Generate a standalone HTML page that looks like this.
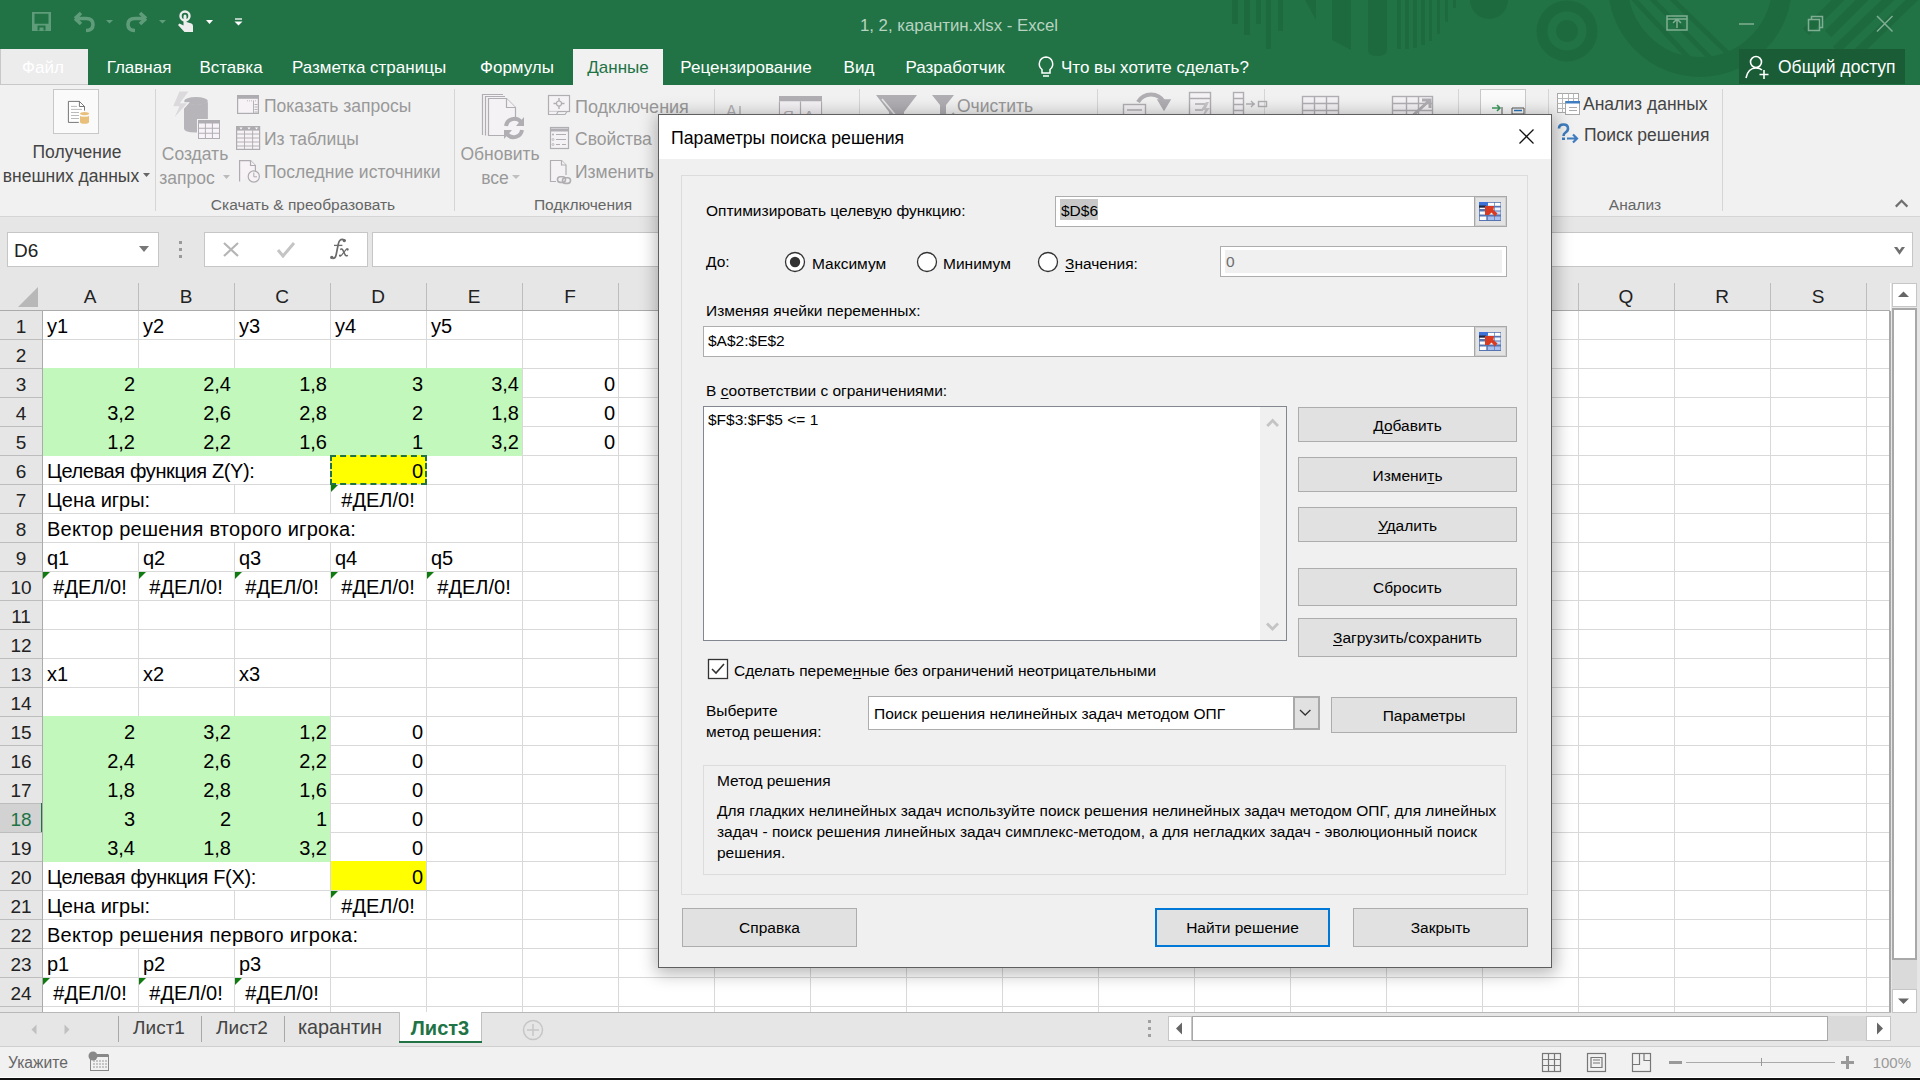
<!DOCTYPE html>
<html><head><meta charset="utf-8"><style>
html,body{margin:0;padding:0;width:1920px;height:1080px;overflow:hidden;background:#fff;position:relative}
body{font-family:"Liberation Sans",sans-serif}
.t{position:absolute;white-space:pre;line-height:1;font-family:"Liberation Sans",sans-serif}
u{text-decoration-thickness:1px;text-underline-offset:2px}
</style></head><body>
<div style="position:absolute;left:0px;top:0px;width:1920px;height:49px;background:#217346"></div>
<div style="position:absolute;left:0px;top:49px;width:1920px;height:36px;background:#217346"></div>
<svg style="position:absolute;left:0;top:0" width="1920" height="85">
<defs><clipPath id="cp1"><rect x="0" y="0" width="1920" height="85"/></clipPath></defs>
<g fill="#1e6a3f">
<rect x="1232" y="0" width="6" height="24"/><rect x="1244" y="0" width="6" height="35"/><rect x="1256" y="0" width="5" height="24"/><rect x="1266" y="0" width="5" height="49"/><rect x="1278" y="0" width="5" height="31"/>
<path d="M1305 0H1316V20z"/>
<path d="M1332 0H1351V50L1332 40z"/>
<path d="M1368 0H1387V50Q1387 56 1377 56Q1368 56 1368 50z"/>
<rect x="1397" y="0" width="4" height="49"/><rect x="1405" y="0" width="4" height="49"/><rect x="1413" y="0" width="4" height="48"/><rect x="1421" y="0" width="4" height="45"/><rect x="1429" y="0" width="3" height="41"/><rect x="1437" y="0" width="3" height="34"/><rect x="1445" y="0" width="3" height="22"/><rect x="1453" y="0" width="3" height="8"/>
<circle cx="1489" cy="0" r="19"/>
<circle cx="1567" cy="31" r="11"/>
</g>
<circle cx="1567" cy="31" r="25" fill="none" stroke="#1e6a3f" stroke-width="11"/>
<circle cx="1700" cy="-15" r="82" fill="none" stroke="#1e6a3f" stroke-width="20"/>
<g stroke="#1e6a3f" stroke-width="5"><path d="M1630 -5L1700 70M1648 -5L1722 70M1668 -5L1745 70"/></g>
<g stroke="#1e6a3f" stroke-width="9"><path d="M1806 32L1842 -4M1828 34L1866 -4M1836 50L1892 -4M1858 52L1916 -4"/></g>
</svg>
<svg style="position:absolute;left:0;top:0" width="260" height="48">
<path d="M32 12H51V31H32z M34.5 13.8V23.8H48.5V13.8z M37.5 25.5V30.5H39.5V27.5H43.5V30.5H45.5V25.5z" fill="#5f9d7a" fill-rule="evenodd"/>
<path d="M75 18.5L81 13M75 18.5L81 24M76 18.5H86Q93 18.5 93 24.5Q93 30.5 86 30.5" fill="none" stroke="#5f9d7a" stroke-width="3.6"/>
<path d="M106 20H113L109.5 23.5z" fill="#5f9d7a"/>
<path d="M146 18.5L140 13M146 18.5L140 24M145 18.5H135Q128 18.5 128 24.5Q128 30.5 135 30.5" fill="none" stroke="#5f9d7a" stroke-width="3.6"/>
<path d="M159 20H166L162.5 23.5z" fill="#5f9d7a"/>
<circle cx="185" cy="16" r="4.5" fill="none" stroke="#eee" stroke-width="2.4"/>
<path d="M183.5 16.5Q183.5 14.5 185 14.5Q186.5 14.5 186.5 16.5V22L191.5 23.5Q193 24 193 26V32H184.5L178 25L179.5 23.5L183.5 25.5z" fill="#eee"/>
<path d="M206 20H213L209.5 24z" fill="#fff"/>
<path d="M235 19H242" stroke="#fff" stroke-width="1.3"/><path d="M234.5 21.5H242.5L238.5 25.5z" fill="#fff"/>
</svg>
<div class="t" style="left:959px;transform:translateX(-50%);top:17.8px;font-size:16.8px;color:#b8d4c0;">1, 2, карантин.xlsx - Excel</div>
<svg style="position:absolute;left:1660px;top:12px" width="240" height="24"><g fill="none" stroke="#7fae93" stroke-width="1.5"><rect x="7" y="4" width="20" height="14"/><path d="M17 16V8M13 11l4-4 4 4M7 7h20"/><path d="M79 12h15"/><rect x="148.5" y="7.5" width="11" height="11"/><path d="M151.5 7.5V4.5h11v11h-3"/><path d="M217 4l15.5 15.5M232.5 4l-15.5 15.5"/></g></svg>
<div style="position:absolute;left:0px;top:49px;width:88px;height:36px;background:#ececec;border-left:1px solid #c8c8c8;border-bottom:1px solid #c8c8c8;box-sizing:border-box"></div>
<div class="t" style="left:43px;transform:translateX(-50%);top:59.1px;font-size:17px;color:#fff;">Файл</div>
<div class="t" style="left:139px;transform:translateX(-50%);top:59.1px;font-size:17px;color:#fff;">Главная</div>
<div class="t" style="left:231px;transform:translateX(-50%);top:59.1px;font-size:17px;color:#fff;">Вставка</div>
<div class="t" style="left:369px;transform:translateX(-50%);top:59.1px;font-size:17px;color:#fff;">Разметка страницы</div>
<div class="t" style="left:517px;transform:translateX(-50%);top:59.1px;font-size:17px;color:#fff;">Формулы</div>
<div class="t" style="left:746px;transform:translateX(-50%);top:59.1px;font-size:17px;color:#fff;">Рецензирование</div>
<div class="t" style="left:859px;transform:translateX(-50%);top:59.1px;font-size:17px;color:#fff;">Вид</div>
<div class="t" style="left:955px;transform:translateX(-50%);top:59.1px;font-size:17px;color:#fff;">Разработчик</div>
<div style="position:absolute;left:573px;top:49px;width:90px;height:37px;background:#f1f1f1"></div>
<div class="t" style="left:618px;transform:translateX(-50%);top:59.1px;font-size:17px;color:#217346;">Данные</div>
<svg style="position:absolute;left:1035px;top:54px" width="22" height="26"><path d="M11 3a7 7 0 0 1 4 12.5v3.5h-8v-3.5A7 7 0 0 1 11 3z M8 22h6" fill="none" stroke="#fff" stroke-width="1.5"/></svg>
<div class="t" style="left:1061px;top:59.1px;font-size:17px;color:#fff;">Что вы хотите сделать?</div>
<div style="position:absolute;left:1739px;top:49px;width:166px;height:35px;background:#1a5c36"></div>
<svg style="position:absolute;left:1745px;top:54px" width="26" height="26"><g fill="none" stroke="#fff" stroke-width="1.6"><circle cx="11" cy="8" r="5.5"/><path d="M1 24 Q3 14 11 14 Q15 14 17 16"/><path d="M19 16v9M14.5 20.5h9"/></g></svg>
<div class="t" style="left:1778px;top:58.7px;font-size:17.5px;color:#fff;">Общий доступ</div>
<div style="position:absolute;left:0px;top:85px;width:1920px;height:132px;background:#f1f1f1;border-bottom:1px solid #d5d5d5;box-sizing:border-box"></div>
<div style="position:absolute;left:155px;top:89px;width:1px;height:122px;background:#d5d5d5"></div>
<div style="position:absolute;left:454px;top:89px;width:1px;height:122px;background:#d5d5d5"></div>
<div style="position:absolute;left:714px;top:89px;width:1px;height:122px;background:#d5d5d5"></div>
<div style="position:absolute;left:859px;top:89px;width:1px;height:122px;background:#d5d5d5"></div>
<div style="position:absolute;left:1097px;top:89px;width:1px;height:122px;background:#d5d5d5"></div>
<div style="position:absolute;left:1264px;top:89px;width:1px;height:122px;background:#d5d5d5"></div>
<div style="position:absolute;left:1458px;top:89px;width:1px;height:122px;background:#d5d5d5"></div>
<div style="position:absolute;left:1548px;top:89px;width:1px;height:122px;background:#d5d5d5"></div>
<div style="position:absolute;left:1722px;top:89px;width:1px;height:122px;background:#d5d5d5"></div>
<div style="position:absolute;left:53px;top:89px;width:46px;height:45px;background:#fafafa;border:1px solid #c8c8c8;box-sizing:border-box"></div>
<svg style="position:absolute;left:0;top:0" width="100" height="130"><g fill="none"><path d="M78.8 122.4H68.4V101.4H79.4L84.5 106.5V110.6" stroke="#666" stroke-width="0.9" fill="#fff"/><path d="M79.4 101.4V106.5H84.5" stroke="#666" stroke-width="0.9"/><path d="M71 106.4H77M71 109.4H82M71 112.5H79M71 115.5H79M71 118.5H79" stroke="#aaa" stroke-width="0.8"/></g><path d="M80 115.6V122Q80 123.8 84.5 123.8Q89 123.8 89 122V115.6Q89 116.8 84.5 116.8Q80 116.8 80 115.6z" fill="#e8c07c"/><ellipse cx="84.5" cy="113.6" rx="4.5" ry="1.6" fill="#e8c07c"/></svg>
<div class="t" style="left:77px;transform:translateX(-50%);top:144.2px;font-size:17.5px;color:#444;">Получение</div>
<div class="t" style="left:71px;transform:translateX(-50%);top:168.2px;font-size:17.5px;color:#444;">внешних данных</div>
<svg style="position:absolute;left:143px;top:173px" width="8" height="5"><path d="M0 0h7l-3.5 4z" fill="#666"/></svg>
<svg style="position:absolute;left:0;top:0" width="230" height="145">
<path d="M184 101V128.5Q184 132.5 196 132.5Q207.9 132.5 207.9 128.5V101z" fill="#b7b5b9"/>
<path d="M183.5 101.2Q196 107 208.4 101.2" stroke="#f2f2f2" stroke-width="1.2" fill="none"/>
<ellipse cx="196" cy="101" rx="11.9" ry="4" fill="#b7b5b9"/>
<path d="M179 91H189.5L181 102.75H188.5L172.5 120.5L178.5 106.75H172.25z" fill="#dcd9dd" stroke="#f2f2f2" stroke-width="1.2"/>
<rect x="197" y="119" width="24" height="21" fill="#f2f2f2"/>
<rect x="198.5" y="120.5" width="21" height="18" fill="#f8f3f8" stroke="#b0aeb2" stroke-width="1"/>
<rect x="198" y="120" width="22" height="3.5" fill="#b0aeb2"/>
<path d="M205.4 123v15.5M212.4 123v15.5M198.5 128.25h21M198.5 133.25h21" stroke="#b0aeb2" stroke-width="1"/>
</svg>
<div class="t" style="left:195px;transform:translateX(-50%);top:146.2px;font-size:17.5px;color:#999999;">Создать</div>
<div class="t" style="left:187px;transform:translateX(-50%);top:170.2px;font-size:17.5px;color:#999999;">запрос</div>
<svg style="position:absolute;left:223px;top:175px" width="8" height="5"><path d="M0 0h7l-3.5 4z" fill="#bbb"/></svg>
<svg style="position:absolute;left:0;top:0" width="300" height="200">
<g fill="#f6f2f6" stroke="#aeacb0" stroke-width="1.2">
<rect x="237.6" y="95.6" width="20.8" height="17.8"/>
<rect x="236.6" y="126.6" width="23" height="22.8"/>
<path d="M239.6 181.4V160.6H250.5L255.4 165.5V172"/><path d="M250.5 160.6V165.5H255.4"/>
<circle cx="253.8" cy="176.5" r="5.6"/>
</g>
<rect x="237.6" y="95.6" width="20.8" height="3.2" fill="#aeacb0"/>
<path d="M247 100.8h10" stroke="#aeacb0" stroke-width="0.8" stroke-dasharray="1 1"/>
<path d="M253.5 101v12.5M254.5 104.5h3M254.5 107h3M254.5 109.5h3M254.5 112h3" stroke="#aeacb0" stroke-width="0.9"/>
<rect x="236.6" y="126.6" width="23" height="4" fill="#aeacb0"/>
<path d="M239.5 127.5h3l-1.5 2z M247.5 127.5h3l-1.5 2z M255 127.5h3l-1.5 2z" fill="#fff"/>
<path d="M244.5 130.5v19M252.6 130.5v19M236.6 134h23M236.6 138h23M236.6 142h23M236.6 146h23" stroke="#aeacb0" stroke-width="0.9"/>
<path d="M253.8 172.5v4.3h3.2" stroke="#aeacb0" stroke-width="1" fill="none"/>
</svg>
<div class="t" style="left:264px;top:98.2px;font-size:17.5px;color:#999999;">Показать запросы</div>
<div class="t" style="left:264px;top:131.2px;font-size:17.5px;color:#999999;">Из таблицы</div>
<div class="t" style="left:264px;top:164.2px;font-size:17.5px;color:#999999;">Последние источники</div>
<div class="t" style="left:303px;transform:translateX(-50%);top:196.9px;font-size:15.5px;color:#666;">Скачать &amp; преобразовать</div>
<svg style="position:absolute;left:0;top:0" width="1100" height="200"><g fill="#f5f2f5" stroke="#b0aeb2" stroke-width="1.2">
<path d="M482.5 135V94.5H503"/><path d="M485.5 135.5V96.5H505"/><path d="M488.5 135.5V98.5H506.5L515.5 107.5V135.5z"/><path d="M506.5 98.5V107.5H515.5"/>
</g>
<circle cx="514" cy="128" r="8.5" fill="#f5f2f5" stroke="none"/>
<path d="M506 126a8.5 8.5 0 0 1 15-4M522 130a8.5 8.5 0 0 1 -15 4" fill="none" stroke="#b0aeb2" stroke-width="4"/>
<path d="M524 117v9h-8z M504 139v-9h8z" fill="#b0aeb2"/>
<g fill="#f5f2f5" stroke="#b0aeb2" stroke-width="1.2">
<rect x="548.5" y="95.5" width="21" height="16"/><path d="M548.5 111.5v3h8l1.5-3M557 114.5h8l2-3"/>
<rect x="550.5" y="127.5" width="18" height="21"/>
<path d="M556 181.5H550.5V160.5H561.5L566 165V175"/><path d="M561.5 160.5V165H566"/>
</g>
<path d="M559 98v11M553.5 103.5h11" stroke="#b0aeb2" stroke-width="1.4"/><circle cx="559" cy="103.5" r="2.5" fill="#f5f2f5" stroke="#b0aeb2" stroke-width="1.2"/>
<path d="M550.5 130h18" stroke="#b0aeb2" stroke-width="3"/>
<path d="M556 134.5h10M556 139.5h10M556 144.5h4M562 144.5h4" stroke="#b0aeb2" stroke-width="1"/>
<circle cx="553" cy="134.5" r="1" fill="#b0aeb2"/><circle cx="553" cy="139.5" r="1" fill="none" stroke="#b0aeb2" stroke-width="0.8"/><circle cx="553" cy="144.5" r="1" fill="none" stroke="#b0aeb2" stroke-width="0.8"/>
<rect x="557.5" y="176.8" width="8" height="5.6" rx="2.8" fill="none" stroke="#b0aeb2" stroke-width="1.6"/><rect x="562.5" y="177.8" width="8" height="5.6" rx="2.8" fill="none" stroke="#b0aeb2" stroke-width="1.6"/>
<text x="726" y="117" font-family="Liberation Sans" font-size="16" fill="#b0aeb2">A</text><path d="M740 106v14" fill="none" stroke="#b0aeb2" stroke-width="1.4"/>
<rect x="779" y="96" width="43" height="5.5" fill="#b0aeb2"/>
<path d="M779.5 101.5V125M821.5 101.5V125M800.5 101.5V125" stroke="#b0aeb2" stroke-width="1.2"/>
<rect x="780" y="101.5" width="41" height="20" fill="#f5f2f5"/>
<path d="M800.5 101.5V125" stroke="#b0aeb2" stroke-width="1.2"/>
<text x="783" y="121" font-family="Liberation Sans" font-size="15" fill="#b0aeb2">Я</text><text x="804" y="121" font-family="Liberation Sans" font-size="15" fill="#b0aeb2">А</text>
<path d="M876 95H917L904 112V125H889V112z" fill="#b0aeb2"/><path d="M882 99L897 117" stroke="#e8e8e8" stroke-width="1.5"/>
<path d="M932 95H954L946 105V125H940V105z" fill="#b0aeb2"/><path d="M944 113L954 122M954 113L944 122" stroke="#b0aeb2" stroke-width="1.8"/>
</g>
</svg>
<div class="t" style="left:500px;transform:translateX(-50%);top:146.2px;font-size:17.5px;color:#999999;">Обновить</div>
<div class="t" style="left:495px;transform:translateX(-50%);top:170.2px;font-size:17.5px;color:#999999;">все</div>
<svg style="position:absolute;left:512px;top:175px" width="9" height="5"><path d="M0 0h8l-4 4z" fill="#c0c0c0"/></svg>
<div class="t" style="left:575px;top:97.8px;font-size:18px;color:#999999;">Подключения</div>
<div class="t" style="left:575px;top:131.2px;font-size:17.5px;color:#999999;">Свойства</div>
<div class="t" style="left:575px;top:164.2px;font-size:17.5px;color:#999999;">Изменить</div>
<div class="t" style="left:583px;transform:translateX(-50%);top:196.9px;font-size:15.5px;color:#666;">Подключения</div>
<svg style="position:absolute;left:1100px;top:88px" width="460" height="30"><g fill="none" stroke="#b0aeb2" stroke-width="1.4"><rect x="23.5" y="16.5" width="22" height="12" fill="#f5f2f5"/><path d="M27 22h15M50 27h15"/><path d="M38 14a15 15 0 0 1 26 0" stroke-width="4"/><path d="M58 12l6 10 6-10z" fill="#b0aeb2"/><rect x="89.5" y="4.5" width="21" height="24" fill="#f5f2f5"/><path d="M89.5 10.5h21M95 16h12M95 22h8"/><path d="M106 14l-5 8h4l-3 8 8-10h-4l3-6z" fill="#c8c6c9" stroke="none"/><rect x="133.5" y="4.5" width="10" height="24" fill="#f5f2f5"/><path d="M133.5 10.5h10M133.5 16.5h10M133.5 22.5h10M146 16h9M151 13l3 3-3 3"/><rect x="158.5" y="13.5" width="8" height="5"/><rect x="202.5" y="8.5" width="36" height="22" fill="#f5f2f5"/><path d="M202.5 15.5h36M202.5 22.5h36M214.5 8.5v22M226.5 8.5v22"/><rect x="292.5" y="8.5" width="40" height="22" fill="#f5f2f5"/><path d="M292.5 15.5h40M292.5 22.5h40M306.5 8.5v22M318.5 8.5v22"/><path d="M310 30l20-18M322 12h8v8" stroke-width="3"/></g><rect x="380.5" y="1.5" width="45" height="30" fill="#fafafa" stroke="#c8c8c8"/><path d="M392 20h8M397 17l3 3-3 3" stroke="#3f9a5f" stroke-width="1.6" fill="none"/><path d="M402 19v9h6M412 20h12v6h-12zM412 27h12v6h-12z" stroke="#555" fill="none"/><path d="M414 22.5h8" stroke="#2b73b8" stroke-width="1.5"/></svg>
<div class="t" style="left:957px;top:98.2px;font-size:17.5px;color:#999999;">Очистить</div>
<svg style="position:absolute;left:1540px;top:88px" width="50" height="60">
<g fill="#fff" stroke="#a8a8a8" stroke-width="1"><rect x="17.5" y="5.5" width="21" height="19"/></g>
<path d="M17.5 10.5h21M17.5 15.5h21M17.5 20.5h21M22.5 5.5v19M28.5 5.5v19M33.5 5.5v19" stroke="#b8b8b8" stroke-width="1"/>
<rect x="25.5" y="13.5" width="14" height="13" fill="#fff" stroke="#a8a8a8"/>
<rect x="25.5" y="13" width="14.5" height="2.5" fill="#3f7cc0"/>
<path d="M29 19.5h8M29 22.5h8" stroke="#aaa" stroke-width="1"/>
<path d="M19 40.5Q19 36.5 23.5 36.5Q28 36.5 28 40.5Q28 43 25.5 44.5Q23.5 45.8 23.5 48" fill="none" stroke="#3f7cc0" stroke-width="2.6"/>
<rect x="22" y="49.5" width="3" height="2.5" fill="#3f7cc0"/>
<path d="M27 50.5h9M33 46.5l4 4-4 4" fill="none" stroke="#3f7cc0" stroke-width="2.2"/>
</svg>
<div class="t" style="left:1583px;top:96.2px;font-size:17.5px;color:#444;">Анализ данных</div>
<div class="t" style="left:1584px;top:127.2px;font-size:17.5px;color:#444;">Поиск решения</div>
<div class="t" style="left:1635px;transform:translateX(-50%);top:196.9px;font-size:15.5px;color:#666;">Анализ</div>
<svg style="position:absolute;left:1893px;top:197px" width="18" height="13"><path d="M2.8 9.6L8.6 3.8L14.4 9.6" stroke="#6f6f6f" stroke-width="2.2" fill="none"/></svg>
<div style="position:absolute;left:0px;top:217px;width:1920px;height:66px;background:#e6e6e6"></div>
<div style="position:absolute;left:7px;top:232px;width:152px;height:35px;background:#fff;border:1px solid #c6c6c6;box-sizing:border-box"></div>
<div class="t" style="left:14px;top:240.9px;font-size:19px;color:#222;">D6</div>
<svg style="position:absolute;left:138px;top:245px" width="12" height="8"><path d="M1 1h10l-5 6z" fill="#777"/></svg>
<div style="position:absolute;left:179px;top:241px;width:3px;height:3px;background:#9a9a9a"></div>
<div style="position:absolute;left:179px;top:248px;width:3px;height:3px;background:#9a9a9a"></div>
<div style="position:absolute;left:179px;top:255px;width:3px;height:3px;background:#9a9a9a"></div>
<div style="position:absolute;left:204px;top:232px;width:164px;height:35px;background:#fff;border:1px solid #c6c6c6;box-sizing:border-box"></div>
<svg style="position:absolute;left:222px;top:241px" width="18" height="17"><path d="M2 2L16 15M16 2L2 15" stroke="#b5b5b5" stroke-width="2.2" fill="none"/></svg>
<svg style="position:absolute;left:276px;top:241px" width="20" height="17"><path d="M2 9L7 15L18 2" stroke="#c4c4c4" stroke-width="3" fill="none"/></svg>
<svg style="position:absolute;left:325px;top:234px" width="30" height="30"><g transform="translate(-325,-234)" fill="none" stroke="#6a6a6a"><path d="M344.8 241.2Q343.6 238.6 341 239.6Q338.8 240.6 337.9 246L336.2 254.5Q335.4 258.6 332.6 258.4" stroke-width="1.7"/><path d="M334 245.4H342.4" stroke-width="1.3"/><path d="M340.2 249.6Q341.8 248 343 250.4L345.2 255Q346.2 256.6 347.8 255.2" stroke-width="1.5"/><path d="M348.2 249.4Q347.2 248.2 345.8 249.8L341.6 255.2Q340.4 256.6 339.4 255.4" stroke-width="1.2"/></g><g transform="translate(-325,-234)" fill="#6a6a6a"><circle cx="344.3" cy="240.6" r="1.7"/><circle cx="331.8" cy="257.4" r="1.7"/><circle cx="347.6" cy="249.6" r="1.1"/><circle cx="340" cy="255.6" r="1.1"/></g></svg>
<div style="position:absolute;left:372px;top:232px;width:1541px;height:35px;background:#fff;border:1px solid #c6c6c6;box-sizing:border-box"></div>
<svg style="position:absolute;left:1890px;top:244px" width="20" height="14"><path d="M4 3H7.2L9.5 6.3L11.8 3H15L9.5 10.8z" fill="#6f6f6f"/></svg>
<div style="position:absolute;left:0px;top:283px;width:1890px;height:28px;background:#e6e6e6"></div>
<svg style="position:absolute;left:17px;top:286px" width="24" height="22"><path d="M21 1V21H1z" fill="#b8b8b8"/></svg>
<div style="position:absolute;left:42px;top:311px;width:1848px;height:701px;background:#fff"></div>
<div style="position:absolute;left:0px;top:311px;width:42px;height:701px;background:#e6e6e6"></div>
<div style="position:absolute;left:42px;top:368px;width:480px;height:30px;background:#c3f8bc"></div>
<div style="position:absolute;left:42px;top:397px;width:480px;height:30px;background:#c3f8bc"></div>
<div style="position:absolute;left:42px;top:426px;width:480px;height:30px;background:#c3f8bc"></div>
<div style="position:absolute;left:42px;top:716px;width:288px;height:30px;background:#c3f8bc"></div>
<div style="position:absolute;left:42px;top:745px;width:288px;height:30px;background:#c3f8bc"></div>
<div style="position:absolute;left:42px;top:774px;width:288px;height:30px;background:#c3f8bc"></div>
<div style="position:absolute;left:42px;top:803px;width:288px;height:30px;background:#c3f8bc"></div>
<div style="position:absolute;left:42px;top:832px;width:288px;height:30px;background:#c3f8bc"></div>
<div style="position:absolute;left:330px;top:455px;width:97px;height:30px;background:#ffff00"></div>
<div style="position:absolute;left:330px;top:861px;width:97px;height:30px;background:#ffff00"></div>
<div style="position:absolute;left:42px;top:339px;width:1848px;height:1px;background:#d9d9d9"></div>
<div style="position:absolute;left:42px;top:368px;width:1848px;height:1px;background:#d9d9d9"></div>
<div style="position:absolute;left:42px;top:397px;width:1848px;height:1px;background:#d9d9d9"></div>
<div style="position:absolute;left:42px;top:426px;width:1848px;height:1px;background:#d9d9d9"></div>
<div style="position:absolute;left:42px;top:455px;width:1848px;height:1px;background:#d9d9d9"></div>
<div style="position:absolute;left:42px;top:484px;width:1848px;height:1px;background:#d9d9d9"></div>
<div style="position:absolute;left:42px;top:513px;width:1848px;height:1px;background:#d9d9d9"></div>
<div style="position:absolute;left:42px;top:542px;width:1848px;height:1px;background:#d9d9d9"></div>
<div style="position:absolute;left:42px;top:571px;width:1848px;height:1px;background:#d9d9d9"></div>
<div style="position:absolute;left:42px;top:600px;width:1848px;height:1px;background:#d9d9d9"></div>
<div style="position:absolute;left:42px;top:629px;width:1848px;height:1px;background:#d9d9d9"></div>
<div style="position:absolute;left:42px;top:658px;width:1848px;height:1px;background:#d9d9d9"></div>
<div style="position:absolute;left:42px;top:687px;width:1848px;height:1px;background:#d9d9d9"></div>
<div style="position:absolute;left:42px;top:716px;width:1848px;height:1px;background:#d9d9d9"></div>
<div style="position:absolute;left:42px;top:745px;width:1848px;height:1px;background:#d9d9d9"></div>
<div style="position:absolute;left:42px;top:774px;width:1848px;height:1px;background:#d9d9d9"></div>
<div style="position:absolute;left:42px;top:803px;width:1848px;height:1px;background:#d9d9d9"></div>
<div style="position:absolute;left:42px;top:832px;width:1848px;height:1px;background:#d9d9d9"></div>
<div style="position:absolute;left:42px;top:861px;width:1848px;height:1px;background:#d9d9d9"></div>
<div style="position:absolute;left:42px;top:890px;width:1848px;height:1px;background:#d9d9d9"></div>
<div style="position:absolute;left:42px;top:919px;width:1848px;height:1px;background:#d9d9d9"></div>
<div style="position:absolute;left:42px;top:948px;width:1848px;height:1px;background:#d9d9d9"></div>
<div style="position:absolute;left:42px;top:977px;width:1848px;height:1px;background:#d9d9d9"></div>
<div style="position:absolute;left:42px;top:1006px;width:1848px;height:1px;background:#d9d9d9"></div>
<div style="position:absolute;left:42px;top:1035px;width:1848px;height:1px;background:#d9d9d9"></div>
<div style="position:absolute;left:138px;top:311px;width:1px;height:144px;background:#d9d9d9"></div>
<div style="position:absolute;left:138px;top:542px;width:1px;height:319px;background:#d9d9d9"></div>
<div style="position:absolute;left:138px;top:948px;width:1px;height:64px;background:#d9d9d9"></div>
<div style="position:absolute;left:234px;top:311px;width:1px;height:144px;background:#d9d9d9"></div>
<div style="position:absolute;left:234px;top:484px;width:1px;height:29px;background:#d9d9d9"></div>
<div style="position:absolute;left:234px;top:542px;width:1px;height:319px;background:#d9d9d9"></div>
<div style="position:absolute;left:234px;top:890px;width:1px;height:29px;background:#d9d9d9"></div>
<div style="position:absolute;left:234px;top:948px;width:1px;height:64px;background:#d9d9d9"></div>
<div style="position:absolute;left:330px;top:311px;width:1px;height:202px;background:#d9d9d9"></div>
<div style="position:absolute;left:330px;top:542px;width:1px;height:377px;background:#d9d9d9"></div>
<div style="position:absolute;left:330px;top:948px;width:1px;height:64px;background:#d9d9d9"></div>
<div style="position:absolute;left:426px;top:311px;width:1px;height:701px;background:#d9d9d9"></div>
<div style="position:absolute;left:522px;top:311px;width:1px;height:701px;background:#d9d9d9"></div>
<div style="position:absolute;left:618px;top:311px;width:1px;height:701px;background:#d9d9d9"></div>
<div style="position:absolute;left:714px;top:311px;width:1px;height:701px;background:#d9d9d9"></div>
<div style="position:absolute;left:810px;top:311px;width:1px;height:701px;background:#d9d9d9"></div>
<div style="position:absolute;left:906px;top:311px;width:1px;height:701px;background:#d9d9d9"></div>
<div style="position:absolute;left:1002px;top:311px;width:1px;height:701px;background:#d9d9d9"></div>
<div style="position:absolute;left:1098px;top:311px;width:1px;height:701px;background:#d9d9d9"></div>
<div style="position:absolute;left:1194px;top:311px;width:1px;height:701px;background:#d9d9d9"></div>
<div style="position:absolute;left:1290px;top:311px;width:1px;height:701px;background:#d9d9d9"></div>
<div style="position:absolute;left:1386px;top:311px;width:1px;height:701px;background:#d9d9d9"></div>
<div style="position:absolute;left:1482px;top:311px;width:1px;height:701px;background:#d9d9d9"></div>
<div style="position:absolute;left:1578px;top:311px;width:1px;height:701px;background:#d9d9d9"></div>
<div style="position:absolute;left:1674px;top:311px;width:1px;height:701px;background:#d9d9d9"></div>
<div style="position:absolute;left:1770px;top:311px;width:1px;height:701px;background:#d9d9d9"></div>
<div style="position:absolute;left:1866px;top:311px;width:1px;height:701px;background:#d9d9d9"></div>
<div style="position:absolute;left:43px;top:369px;width:479px;height:28px;background:#c3f8bc"></div>
<div style="position:absolute;left:43px;top:398px;width:479px;height:28px;background:#c3f8bc"></div>
<div style="position:absolute;left:43px;top:427px;width:479px;height:28px;background:#c3f8bc"></div>
<div style="position:absolute;left:43px;top:717px;width:287px;height:28px;background:#c3f8bc"></div>
<div style="position:absolute;left:43px;top:746px;width:287px;height:28px;background:#c3f8bc"></div>
<div style="position:absolute;left:43px;top:775px;width:287px;height:28px;background:#c3f8bc"></div>
<div style="position:absolute;left:43px;top:804px;width:287px;height:28px;background:#c3f8bc"></div>
<div style="position:absolute;left:43px;top:833px;width:287px;height:28px;background:#c3f8bc"></div>
<div style="position:absolute;left:43px;top:368px;width:479px;height:88px;background:#c3f8bc"></div>
<div style="position:absolute;left:43px;top:716px;width:287px;height:146px;background:#c3f8bc"></div>
<div style="position:absolute;left:331px;top:455px;width:95px;height:29px;background:#ffff00"></div>
<div style="position:absolute;left:331px;top:861px;width:95px;height:29px;background:#ffff00"></div>
<div class="t" style="left:47px;top:316.1px;font-size:20px;color:#000;">y1</div>
<div class="t" style="left:143px;top:316.1px;font-size:20px;color:#000;">y2</div>
<div class="t" style="left:239px;top:316.1px;font-size:20px;color:#000;">y3</div>
<div class="t" style="left:335px;top:316.1px;font-size:20px;color:#000;">y4</div>
<div class="t" style="left:431px;top:316.1px;font-size:20px;color:#000;">y5</div>
<div class="t" style="right:1785px;top:374.1px;font-size:20px;color:#000;">2</div>
<div class="t" style="right:1689px;top:374.1px;font-size:20px;color:#000;">2,4</div>
<div class="t" style="right:1593px;top:374.1px;font-size:20px;color:#000;">1,8</div>
<div class="t" style="right:1497px;top:374.1px;font-size:20px;color:#000;">3</div>
<div class="t" style="right:1401px;top:374.1px;font-size:20px;color:#000;">3,4</div>
<div class="t" style="right:1305px;top:374.1px;font-size:20px;color:#000;">0</div>
<div class="t" style="right:1785px;top:403.1px;font-size:20px;color:#000;">3,2</div>
<div class="t" style="right:1689px;top:403.1px;font-size:20px;color:#000;">2,6</div>
<div class="t" style="right:1593px;top:403.1px;font-size:20px;color:#000;">2,8</div>
<div class="t" style="right:1497px;top:403.1px;font-size:20px;color:#000;">2</div>
<div class="t" style="right:1401px;top:403.1px;font-size:20px;color:#000;">1,8</div>
<div class="t" style="right:1305px;top:403.1px;font-size:20px;color:#000;">0</div>
<div class="t" style="right:1785px;top:432.1px;font-size:20px;color:#000;">1,2</div>
<div class="t" style="right:1689px;top:432.1px;font-size:20px;color:#000;">2,2</div>
<div class="t" style="right:1593px;top:432.1px;font-size:20px;color:#000;">1,6</div>
<div class="t" style="right:1497px;top:432.1px;font-size:20px;color:#000;">1</div>
<div class="t" style="right:1401px;top:432.1px;font-size:20px;color:#000;">3,2</div>
<div class="t" style="right:1305px;top:432.1px;font-size:20px;color:#000;">0</div>
<div class="t" style="left:47px;top:461.1px;font-size:20px;color:#000;letter-spacing:-0.38px;">Целевая функция Z(Y):</div>
<div class="t" style="right:1497px;top:461.1px;font-size:20px;color:#000;">0</div>
<div class="t" style="left:47px;top:490.1px;font-size:20px;color:#000;">Цена игры:</div>
<div class="t" style="left:378px;transform:translateX(-50%);top:490.1px;font-size:20px;color:#000;">#ДЕЛ/0!</div>
<svg style="position:absolute;left:331px;top:485px" width="8" height="8"><path d="M0 0H7L0 7z" fill="#0f7b0f"/></svg>
<div class="t" style="left:47px;top:519.1px;font-size:20px;color:#000;letter-spacing:0.28px;">Вектор решения второго игрока:</div>
<div class="t" style="left:47px;top:548.1px;font-size:20px;color:#000;">q1</div>
<div class="t" style="left:90px;transform:translateX(-50%);top:577.1px;font-size:20px;color:#000;">#ДЕЛ/0!</div>
<svg style="position:absolute;left:43px;top:572px" width="8" height="8"><path d="M0 0H7L0 7z" fill="#0f7b0f"/></svg>
<div class="t" style="left:143px;top:548.1px;font-size:20px;color:#000;">q2</div>
<div class="t" style="left:186px;transform:translateX(-50%);top:577.1px;font-size:20px;color:#000;">#ДЕЛ/0!</div>
<svg style="position:absolute;left:139px;top:572px" width="8" height="8"><path d="M0 0H7L0 7z" fill="#0f7b0f"/></svg>
<div class="t" style="left:239px;top:548.1px;font-size:20px;color:#000;">q3</div>
<div class="t" style="left:282px;transform:translateX(-50%);top:577.1px;font-size:20px;color:#000;">#ДЕЛ/0!</div>
<svg style="position:absolute;left:235px;top:572px" width="8" height="8"><path d="M0 0H7L0 7z" fill="#0f7b0f"/></svg>
<div class="t" style="left:335px;top:548.1px;font-size:20px;color:#000;">q4</div>
<div class="t" style="left:378px;transform:translateX(-50%);top:577.1px;font-size:20px;color:#000;">#ДЕЛ/0!</div>
<svg style="position:absolute;left:331px;top:572px" width="8" height="8"><path d="M0 0H7L0 7z" fill="#0f7b0f"/></svg>
<div class="t" style="left:431px;top:548.1px;font-size:20px;color:#000;">q5</div>
<div class="t" style="left:474px;transform:translateX(-50%);top:577.1px;font-size:20px;color:#000;">#ДЕЛ/0!</div>
<svg style="position:absolute;left:427px;top:572px" width="8" height="8"><path d="M0 0H7L0 7z" fill="#0f7b0f"/></svg>
<div class="t" style="left:47px;top:664.1px;font-size:20px;color:#000;">x1</div>
<div class="t" style="left:143px;top:664.1px;font-size:20px;color:#000;">x2</div>
<div class="t" style="left:239px;top:664.1px;font-size:20px;color:#000;">x3</div>
<div class="t" style="right:1785px;top:722.1px;font-size:20px;color:#000;">2</div>
<div class="t" style="right:1689px;top:722.1px;font-size:20px;color:#000;">3,2</div>
<div class="t" style="right:1593px;top:722.1px;font-size:20px;color:#000;">1,2</div>
<div class="t" style="right:1497px;top:722.1px;font-size:20px;color:#000;">0</div>
<div class="t" style="right:1785px;top:751.1px;font-size:20px;color:#000;">2,4</div>
<div class="t" style="right:1689px;top:751.1px;font-size:20px;color:#000;">2,6</div>
<div class="t" style="right:1593px;top:751.1px;font-size:20px;color:#000;">2,2</div>
<div class="t" style="right:1497px;top:751.1px;font-size:20px;color:#000;">0</div>
<div class="t" style="right:1785px;top:780.1px;font-size:20px;color:#000;">1,8</div>
<div class="t" style="right:1689px;top:780.1px;font-size:20px;color:#000;">2,8</div>
<div class="t" style="right:1593px;top:780.1px;font-size:20px;color:#000;">1,6</div>
<div class="t" style="right:1497px;top:780.1px;font-size:20px;color:#000;">0</div>
<div class="t" style="right:1785px;top:809.1px;font-size:20px;color:#000;">3</div>
<div class="t" style="right:1689px;top:809.1px;font-size:20px;color:#000;">2</div>
<div class="t" style="right:1593px;top:809.1px;font-size:20px;color:#000;">1</div>
<div class="t" style="right:1497px;top:809.1px;font-size:20px;color:#000;">0</div>
<div class="t" style="right:1785px;top:838.1px;font-size:20px;color:#000;">3,4</div>
<div class="t" style="right:1689px;top:838.1px;font-size:20px;color:#000;">1,8</div>
<div class="t" style="right:1593px;top:838.1px;font-size:20px;color:#000;">3,2</div>
<div class="t" style="right:1497px;top:838.1px;font-size:20px;color:#000;">0</div>
<div class="t" style="left:47px;top:867.1px;font-size:20px;color:#000;letter-spacing:-0.3px;">Целевая функция F(X):</div>
<div class="t" style="right:1497px;top:867.1px;font-size:20px;color:#000;">0</div>
<div class="t" style="left:47px;top:896.1px;font-size:20px;color:#000;">Цена игры:</div>
<div class="t" style="left:378px;transform:translateX(-50%);top:896.1px;font-size:20px;color:#000;">#ДЕЛ/0!</div>
<svg style="position:absolute;left:331px;top:891px" width="8" height="8"><path d="M0 0H7L0 7z" fill="#0f7b0f"/></svg>
<div class="t" style="left:47px;top:925.1px;font-size:20px;color:#000;letter-spacing:0.28px;">Вектор решения первого игрока:</div>
<div class="t" style="left:47px;top:954.1px;font-size:20px;color:#000;">p1</div>
<div class="t" style="left:90px;transform:translateX(-50%);top:983.1px;font-size:20px;color:#000;">#ДЕЛ/0!</div>
<svg style="position:absolute;left:43px;top:978px" width="8" height="8"><path d="M0 0H7L0 7z" fill="#0f7b0f"/></svg>
<div class="t" style="left:143px;top:954.1px;font-size:20px;color:#000;">p2</div>
<div class="t" style="left:186px;transform:translateX(-50%);top:983.1px;font-size:20px;color:#000;">#ДЕЛ/0!</div>
<svg style="position:absolute;left:139px;top:978px" width="8" height="8"><path d="M0 0H7L0 7z" fill="#0f7b0f"/></svg>
<div class="t" style="left:239px;top:954.1px;font-size:20px;color:#000;">p3</div>
<div class="t" style="left:282px;transform:translateX(-50%);top:983.1px;font-size:20px;color:#000;">#ДЕЛ/0!</div>
<svg style="position:absolute;left:235px;top:978px" width="8" height="8"><path d="M0 0H7L0 7z" fill="#0f7b0f"/></svg>
<div style="position:absolute;left:330px;top:455px;width:97px;height:30px;border:2px dashed #217346;box-sizing:border-box"></div>
<div class="t" style="left:90px;transform:translateX(-50%);top:286.9px;font-size:19px;color:#222;">A</div>
<div style="position:absolute;left:138px;top:283px;width:1px;height:27px;background:#bdbdbd"></div>
<div class="t" style="left:186px;transform:translateX(-50%);top:286.9px;font-size:19px;color:#222;">B</div>
<div style="position:absolute;left:234px;top:283px;width:1px;height:27px;background:#bdbdbd"></div>
<div class="t" style="left:282px;transform:translateX(-50%);top:286.9px;font-size:19px;color:#222;">C</div>
<div style="position:absolute;left:330px;top:283px;width:1px;height:27px;background:#bdbdbd"></div>
<div class="t" style="left:378px;transform:translateX(-50%);top:286.9px;font-size:19px;color:#222;">D</div>
<div style="position:absolute;left:426px;top:283px;width:1px;height:27px;background:#bdbdbd"></div>
<div class="t" style="left:474px;transform:translateX(-50%);top:286.9px;font-size:19px;color:#222;">E</div>
<div style="position:absolute;left:522px;top:283px;width:1px;height:27px;background:#bdbdbd"></div>
<div class="t" style="left:570px;transform:translateX(-50%);top:286.9px;font-size:19px;color:#222;">F</div>
<div style="position:absolute;left:618px;top:283px;width:1px;height:27px;background:#bdbdbd"></div>
<div class="t" style="left:666px;transform:translateX(-50%);top:286.9px;font-size:19px;color:#222;">G</div>
<div style="position:absolute;left:714px;top:283px;width:1px;height:27px;background:#bdbdbd"></div>
<div class="t" style="left:762px;transform:translateX(-50%);top:286.9px;font-size:19px;color:#222;">H</div>
<div style="position:absolute;left:810px;top:283px;width:1px;height:27px;background:#bdbdbd"></div>
<div class="t" style="left:858px;transform:translateX(-50%);top:286.9px;font-size:19px;color:#222;">I</div>
<div style="position:absolute;left:906px;top:283px;width:1px;height:27px;background:#bdbdbd"></div>
<div class="t" style="left:954px;transform:translateX(-50%);top:286.9px;font-size:19px;color:#222;">J</div>
<div style="position:absolute;left:1002px;top:283px;width:1px;height:27px;background:#bdbdbd"></div>
<div class="t" style="left:1050px;transform:translateX(-50%);top:286.9px;font-size:19px;color:#222;">K</div>
<div style="position:absolute;left:1098px;top:283px;width:1px;height:27px;background:#bdbdbd"></div>
<div class="t" style="left:1146px;transform:translateX(-50%);top:286.9px;font-size:19px;color:#222;">L</div>
<div style="position:absolute;left:1194px;top:283px;width:1px;height:27px;background:#bdbdbd"></div>
<div class="t" style="left:1242px;transform:translateX(-50%);top:286.9px;font-size:19px;color:#222;">M</div>
<div style="position:absolute;left:1290px;top:283px;width:1px;height:27px;background:#bdbdbd"></div>
<div class="t" style="left:1338px;transform:translateX(-50%);top:286.9px;font-size:19px;color:#222;">N</div>
<div style="position:absolute;left:1386px;top:283px;width:1px;height:27px;background:#bdbdbd"></div>
<div class="t" style="left:1434px;transform:translateX(-50%);top:286.9px;font-size:19px;color:#222;">O</div>
<div style="position:absolute;left:1482px;top:283px;width:1px;height:27px;background:#bdbdbd"></div>
<div class="t" style="left:1530px;transform:translateX(-50%);top:286.9px;font-size:19px;color:#222;">P</div>
<div style="position:absolute;left:1578px;top:283px;width:1px;height:27px;background:#bdbdbd"></div>
<div class="t" style="left:1626px;transform:translateX(-50%);top:286.9px;font-size:19px;color:#222;">Q</div>
<div style="position:absolute;left:1674px;top:283px;width:1px;height:27px;background:#bdbdbd"></div>
<div class="t" style="left:1722px;transform:translateX(-50%);top:286.9px;font-size:19px;color:#222;">R</div>
<div style="position:absolute;left:1770px;top:283px;width:1px;height:27px;background:#bdbdbd"></div>
<div class="t" style="left:1818px;transform:translateX(-50%);top:286.9px;font-size:19px;color:#222;">S</div>
<div style="position:absolute;left:1866px;top:283px;width:1px;height:27px;background:#bdbdbd"></div>
<div style="position:absolute;left:0px;top:310px;width:1890px;height:1px;background:#ababab"></div>
<div class="t" style="left:21px;transform:translateX(-50%);top:316.9px;font-size:19px;color:#222;">1</div>
<div style="position:absolute;left:0px;top:339px;width:42px;height:1px;background:#bdbdbd"></div>
<div class="t" style="left:21px;transform:translateX(-50%);top:345.9px;font-size:19px;color:#222;">2</div>
<div style="position:absolute;left:0px;top:368px;width:42px;height:1px;background:#bdbdbd"></div>
<div class="t" style="left:21px;transform:translateX(-50%);top:374.9px;font-size:19px;color:#222;">3</div>
<div style="position:absolute;left:0px;top:397px;width:42px;height:1px;background:#bdbdbd"></div>
<div class="t" style="left:21px;transform:translateX(-50%);top:403.9px;font-size:19px;color:#222;">4</div>
<div style="position:absolute;left:0px;top:426px;width:42px;height:1px;background:#bdbdbd"></div>
<div class="t" style="left:21px;transform:translateX(-50%);top:432.9px;font-size:19px;color:#222;">5</div>
<div style="position:absolute;left:0px;top:455px;width:42px;height:1px;background:#bdbdbd"></div>
<div class="t" style="left:21px;transform:translateX(-50%);top:461.9px;font-size:19px;color:#222;">6</div>
<div style="position:absolute;left:0px;top:484px;width:42px;height:1px;background:#bdbdbd"></div>
<div class="t" style="left:21px;transform:translateX(-50%);top:490.9px;font-size:19px;color:#222;">7</div>
<div style="position:absolute;left:0px;top:513px;width:42px;height:1px;background:#bdbdbd"></div>
<div class="t" style="left:21px;transform:translateX(-50%);top:519.9px;font-size:19px;color:#222;">8</div>
<div style="position:absolute;left:0px;top:542px;width:42px;height:1px;background:#bdbdbd"></div>
<div class="t" style="left:21px;transform:translateX(-50%);top:548.9px;font-size:19px;color:#222;">9</div>
<div style="position:absolute;left:0px;top:571px;width:42px;height:1px;background:#bdbdbd"></div>
<div class="t" style="left:21px;transform:translateX(-50%);top:577.9px;font-size:19px;color:#222;">10</div>
<div style="position:absolute;left:0px;top:600px;width:42px;height:1px;background:#bdbdbd"></div>
<div class="t" style="left:21px;transform:translateX(-50%);top:606.9px;font-size:19px;color:#222;">11</div>
<div style="position:absolute;left:0px;top:629px;width:42px;height:1px;background:#bdbdbd"></div>
<div class="t" style="left:21px;transform:translateX(-50%);top:635.9px;font-size:19px;color:#222;">12</div>
<div style="position:absolute;left:0px;top:658px;width:42px;height:1px;background:#bdbdbd"></div>
<div class="t" style="left:21px;transform:translateX(-50%);top:664.9px;font-size:19px;color:#222;">13</div>
<div style="position:absolute;left:0px;top:687px;width:42px;height:1px;background:#bdbdbd"></div>
<div class="t" style="left:21px;transform:translateX(-50%);top:693.9px;font-size:19px;color:#222;">14</div>
<div style="position:absolute;left:0px;top:716px;width:42px;height:1px;background:#bdbdbd"></div>
<div class="t" style="left:21px;transform:translateX(-50%);top:722.9px;font-size:19px;color:#222;">15</div>
<div style="position:absolute;left:0px;top:745px;width:42px;height:1px;background:#bdbdbd"></div>
<div class="t" style="left:21px;transform:translateX(-50%);top:751.9px;font-size:19px;color:#222;">16</div>
<div style="position:absolute;left:0px;top:774px;width:42px;height:1px;background:#bdbdbd"></div>
<div class="t" style="left:21px;transform:translateX(-50%);top:780.9px;font-size:19px;color:#222;">17</div>
<div style="position:absolute;left:0px;top:803px;width:42px;height:1px;background:#bdbdbd"></div>
<div style="position:absolute;left:0px;top:804px;width:41px;height:28px;background:#d2d2d2"></div>
<div style="position:absolute;left:41px;top:803px;width:2px;height:30px;background:#217346"></div>
<div class="t" style="left:21px;transform:translateX(-50%);top:809.9px;font-size:19px;color:#217346;">18</div>
<div style="position:absolute;left:0px;top:832px;width:42px;height:1px;background:#bdbdbd"></div>
<div class="t" style="left:21px;transform:translateX(-50%);top:838.9px;font-size:19px;color:#222;">19</div>
<div style="position:absolute;left:0px;top:861px;width:42px;height:1px;background:#bdbdbd"></div>
<div class="t" style="left:21px;transform:translateX(-50%);top:867.9px;font-size:19px;color:#222;">20</div>
<div style="position:absolute;left:0px;top:890px;width:42px;height:1px;background:#bdbdbd"></div>
<div class="t" style="left:21px;transform:translateX(-50%);top:896.9px;font-size:19px;color:#222;">21</div>
<div style="position:absolute;left:0px;top:919px;width:42px;height:1px;background:#bdbdbd"></div>
<div class="t" style="left:21px;transform:translateX(-50%);top:925.9px;font-size:19px;color:#222;">22</div>
<div style="position:absolute;left:0px;top:948px;width:42px;height:1px;background:#bdbdbd"></div>
<div class="t" style="left:21px;transform:translateX(-50%);top:954.9px;font-size:19px;color:#222;">23</div>
<div style="position:absolute;left:0px;top:977px;width:42px;height:1px;background:#bdbdbd"></div>
<div class="t" style="left:21px;transform:translateX(-50%);top:983.9px;font-size:19px;color:#222;">24</div>
<div style="position:absolute;left:0px;top:1006px;width:42px;height:1px;background:#bdbdbd"></div>
<div style="position:absolute;left:42px;top:311px;width:1px;height:701px;background:#ababab"></div>
<div style="position:absolute;left:1889px;top:311px;width:2px;height:702px;background:#a8a8a8"></div>
<div style="position:absolute;left:0px;top:1012px;width:1891px;height:1px;background:#b8b8b8"></div>
<div style="position:absolute;left:1891px;top:283px;width:29px;height:730px;background:#e6e6e6"></div>
<div style="position:absolute;left:1892px;top:283px;width:25px;height:24px;background:#fff;border:1px solid #c6c6c6;box-sizing:border-box"></div>
<svg style="position:absolute;left:1898px;top:291px" width="12" height="7"><path d="M0 6L5.5 0.5L11 6z" fill="#666"/></svg>
<div style="position:absolute;left:1892px;top:308px;width:25px;height:652px;background:#fff;border:2px solid #a8a8a8;box-sizing:border-box"></div>
<div style="position:absolute;left:1892px;top:960px;width:25px;height:29px;background:#dadada"></div>
<div style="position:absolute;left:1892px;top:989px;width:25px;height:24px;background:#fff;border:1px solid #c6c6c6;box-sizing:border-box"></div>
<svg style="position:absolute;left:1898px;top:998px" width="12" height="7"><path d="M0 0.5L5.5 6L11 0.5z" fill="#666"/></svg>
<div style="position:absolute;left:0px;top:1013px;width:1920px;height:34px;background:#e6e6e6"></div>
<div style="position:absolute;left:0px;top:1046px;width:1920px;height:1px;background:#cfcfcf"></div>
<svg style="position:absolute;left:30px;top:1024px" width="45" height="12"><path d="M6.5 0.5L1.5 5.5L6.5 10.5z M34.5 0.5L39.5 5.5L34.5 10.5z" fill="#c0c0c0"/></svg>
<div style="position:absolute;left:118px;top:1016px;width:1px;height:26px;background:#a8a8a8"></div>
<div style="position:absolute;left:201px;top:1016px;width:1px;height:26px;background:#a8a8a8"></div>
<div style="position:absolute;left:284px;top:1016px;width:1px;height:26px;background:#a8a8a8"></div>
<div style="position:absolute;left:399px;top:1012px;width:83px;height:31px;background:#fff;border-left:1px solid #c0c0c0;border-right:1px solid #c0c0c0;box-sizing:border-box"></div>
<div style="position:absolute;left:399px;top:1041px;width:83px;height:2px;background:#217346"></div>
<div class="t" style="left:159px;transform:translateX(-50%);top:1017.9px;font-size:19px;color:#444;">Лист1</div>
<div class="t" style="left:242px;transform:translateX(-50%);top:1017.9px;font-size:19px;color:#444;">Лист2</div>
<div class="t" style="left:340px;transform:translateX(-50%);top:1018.2px;font-size:19.8px;color:#444;">карантин</div>
<div class="t" style="left:440px;transform:translateX(-50%);top:1017.6px;font-size:20px;color:#217346;"><b>Лист3</b></div>
<svg style="position:absolute;left:522px;top:1019px" width="22" height="22"><circle cx="11" cy="11" r="9.5" fill="none" stroke="#c6c6c6" stroke-width="1.5"/><path d="M11 5v12M5 11h12" stroke="#c6c6c6" stroke-width="1.5"/></svg>
<div style="position:absolute;left:1148px;top:1020px;width:3px;height:3px;background:#a0a0a0"></div>
<div style="position:absolute;left:1148px;top:1027px;width:3px;height:3px;background:#a0a0a0"></div>
<div style="position:absolute;left:1148px;top:1034px;width:3px;height:3px;background:#a0a0a0"></div>
<div style="position:absolute;left:1168px;top:1016px;width:24px;height:25px;background:#fff;border:1px solid #c6c6c6;box-sizing:border-box"></div>
<svg style="position:absolute;left:1175px;top:1022px" width="8" height="13"><path d="M7 0.5L1 6.5L7 12.5z" fill="#666"/></svg>
<div style="position:absolute;left:1192px;top:1016px;width:636px;height:25px;background:#fff;border:1px solid #a8a8a8;box-sizing:border-box"></div>
<div style="position:absolute;left:1828px;top:1016px;width:39px;height:25px;background:#dadada"></div>
<div style="position:absolute;left:1866px;top:1016px;width:25px;height:25px;background:#fff;border:1px solid #c6c6c6;box-sizing:border-box"></div>
<svg style="position:absolute;left:1876px;top:1022px" width="8" height="13"><path d="M1 0.5L7 6.5L1 12.5z" fill="#666"/></svg>
<div style="position:absolute;left:0px;top:1047px;width:1920px;height:31px;background:#f1f1f1"></div>
<div style="position:absolute;left:0px;top:1077px;width:1920px;height:1px;background:#fff"></div>
<div style="position:absolute;left:0px;top:1078px;width:1920px;height:2px;background:#111"></div>
<div class="t" style="left:8px;top:1054.8px;font-size:15.6px;color:#666;">Укажите</div>
<svg style="position:absolute;left:88px;top:1051px" width="24" height="22"><circle cx="5" cy="5" r="4.5" fill="#888"/><rect x="2.5" y="4.5" width="18" height="15" fill="none" stroke="#888"/><path d="M9 4.5h11.5" stroke="#888" stroke-width="3"/><path d="M5 10h14M5 13h14M5 16h14" stroke="#999" stroke-dasharray="2 1"/></svg>
<svg style="position:absolute;left:1540px;top:1051px" width="116" height="24"><g fill="none" stroke="#777" stroke-width="1.2"><rect x="2.5" y="2.5" width="18" height="18"/><path d="M2.5 8.5h18M2.5 14.5h18M8.5 2.5v18M14.5 2.5v18"/><rect x="47.5" y="2.5" width="18" height="18"/><path d="M51 6.5h11v10h-11zM53 9h7M53 12h7"/><rect x="92.5" y="2.5" width="18" height="18"/><path d="M92.5 13.5h7v-11M104 2.5v7h6.5"/></g></svg>
<div style="position:absolute;left:1669px;top:1061px;width:13px;height:3px;background:#999"></div>
<div style="position:absolute;left:1686px;top:1062px;width:149px;height:1px;background:#aaa"></div>
<div style="position:absolute;left:1761px;top:1058px;width:1px;height:8px;background:#999"></div>
<div style="position:absolute;left:1841px;top:1061px;width:13px;height:3px;background:#999"></div>
<div style="position:absolute;left:1846px;top:1056px;width:3px;height:13px;background:#999"></div>
<div class="t" style="right:9px;top:1055.3px;font-size:15px;color:#999;">100%</div>
<div style="position:absolute;left:658px;top:114px;width:894px;height:854px;box-shadow:1px 3px 16px 3px rgba(0,0,0,0.28);background:#f0f0f0;border:1px solid #5f5f5f;box-sizing:border-box"></div>
<div style="position:absolute;left:659px;top:115px;width:892px;height:44px;background:#fff"></div>
<div class="t" style="left:671px;top:130.0px;font-size:17.7px;color:#000;">Параметры поиска решения</div>
<svg style="position:absolute;left:1516px;top:126px" width="20" height="20"><path d="M3.5 3.5L17.5 17.5M17.5 3.5L3.5 17.5" stroke="#111" stroke-width="1.25"/></svg>
<div style="position:absolute;left:681px;top:175px;width:847px;height:720px;border:1px solid #dcdcdc;box-sizing:border-box"></div>
<div class="t" style="left:706px;top:202.9px;font-size:15.5px;color:#000;">Оптимизировать целев<u>у</u>ю функцию:</div>
<div style="position:absolute;left:1055px;top:196px;width:420px;height:31px;background:#fff;border:1px solid #adadad;border-right:none;box-sizing:border-box"></div>
<div style="position:absolute;left:1060px;top:199px;width:38px;height:21px;background:#c8c8c8"></div>
<div class="t" style="left:1061px;top:203.4px;font-size:15.5px;color:#000;">$D$6</div>
<div style="position:absolute;left:1474px;top:196px;width:33px;height:31px;background:#e3e3e3;border:1px solid #a8a8a8;box-shadow:inset 0 0 0 1px #d0d0d0;box-sizing:border-box"></div>
<svg style="position:absolute;left:1474px;top:196px" width="33" height="31"><rect x="5" y="6" width="22" height="19" fill="#5574b0"/><rect x="5.8" y="10" width="7" height="3" fill="#fff"/><rect x="13.8" y="6.8" width="6.5" height="3" fill="#fff"/><rect x="21" y="6.8" width="5.5" height="3" fill="#fff"/><rect x="13.8" y="11.5" width="6.5" height="3" fill="#fff"/><rect x="21" y="11.5" width="5.5" height="3" fill="#eef4ff"/><rect x="5.8" y="15.5" width="6.5" height="3" fill="#fff"/><rect x="13.8" y="15.5" width="6.5" height="3" fill="#fff"/><rect x="21" y="15.5" width="5.5" height="3" fill="#c8d8f8"/><rect x="5.8" y="20.5" width="6.5" height="3.5" fill="#fff"/><rect x="13.8" y="20.5" width="6.5" height="3.5" fill="#a8c0f0"/><rect x="21" y="20.5" width="5.5" height="3.5" fill="#a8c0f0"/><rect x="5" y="6" width="9" height="3.5" fill="#3f72d8"/><rect x="5" y="9.5" width="7" height="2.2" fill="#1c2a48"/><path d="M11 10H20L19.5 14L23.5 17.5L21 20.5L17.5 16.5L15 19H11z" fill="#d83a22"/></svg>
<div class="t" style="left:706px;top:253.9px;font-size:15.5px;color:#000;">До:</div>
<svg style="position:absolute;left:784px;top:251px" width="22" height="22"><circle cx="11" cy="11" r="9.5" fill="#fff" stroke="#333" stroke-width="1.3"/><circle cx="11" cy="11" r="5.2" fill="#333"/></svg>
<div class="t" style="left:812px;top:255.9px;font-size:15.5px;color:#000;">Максимум</div>
<svg style="position:absolute;left:916px;top:251px" width="22" height="22"><circle cx="11" cy="11" r="9.5" fill="#fff" stroke="#333" stroke-width="1.3"/></svg>
<div class="t" style="left:943px;top:255.9px;font-size:15.5px;color:#000;">Минимум</div>
<svg style="position:absolute;left:1037px;top:251px" width="22" height="22"><circle cx="11" cy="11" r="9.5" fill="#fff" stroke="#333" stroke-width="1.3"/></svg>
<div class="t" style="left:1065px;top:255.9px;font-size:15.5px;color:#000;"><u>З</u>начения:</div>
<div style="position:absolute;left:1220px;top:246px;width:287px;height:31px;background:#fff;border:1px solid #adadad;box-sizing:border-box"></div>
<div style="position:absolute;left:1225px;top:250px;width:277px;height:23px;background:#f0f0f0"></div>
<div class="t" style="left:1226px;top:253.9px;font-size:15.5px;color:#6d6d6d;">0</div>
<div class="t" style="left:706px;top:302.9px;font-size:15.5px;color:#000;">Изменяя ячейки переменных:</div>
<div style="position:absolute;left:703px;top:326px;width:772px;height:31px;background:#fff;border:1px solid #adadad;border-right:none;box-sizing:border-box"></div>
<div class="t" style="left:708px;top:332.9px;font-size:15.5px;color:#000;">$A$2:$E$2</div>
<div style="position:absolute;left:1474px;top:326px;width:33px;height:31px;background:#e3e3e3;border:1px solid #a8a8a8;box-shadow:inset 0 0 0 1px #d0d0d0;box-sizing:border-box"></div>
<svg style="position:absolute;left:1474px;top:326px" width="33" height="31"><rect x="5" y="6" width="22" height="19" fill="#5574b0"/><rect x="5.8" y="10" width="7" height="3" fill="#fff"/><rect x="13.8" y="6.8" width="6.5" height="3" fill="#fff"/><rect x="21" y="6.8" width="5.5" height="3" fill="#fff"/><rect x="13.8" y="11.5" width="6.5" height="3" fill="#fff"/><rect x="21" y="11.5" width="5.5" height="3" fill="#eef4ff"/><rect x="5.8" y="15.5" width="6.5" height="3" fill="#fff"/><rect x="13.8" y="15.5" width="6.5" height="3" fill="#fff"/><rect x="21" y="15.5" width="5.5" height="3" fill="#c8d8f8"/><rect x="5.8" y="20.5" width="6.5" height="3.5" fill="#fff"/><rect x="13.8" y="20.5" width="6.5" height="3.5" fill="#a8c0f0"/><rect x="21" y="20.5" width="5.5" height="3.5" fill="#a8c0f0"/><rect x="5" y="6" width="9" height="3.5" fill="#3f72d8"/><rect x="5" y="9.5" width="7" height="2.2" fill="#1c2a48"/><path d="M11 10H20L19.5 14L23.5 17.5L21 20.5L17.5 16.5L15 19H11z" fill="#d83a22"/></svg>
<div class="t" style="left:706px;top:382.9px;font-size:15.5px;color:#000;">В <u>с</u>оответствии с ограничениями:</div>
<div style="position:absolute;left:703px;top:406px;width:584px;height:235px;background:#fff;border:1px solid #828790;box-sizing:border-box"></div>
<div style="position:absolute;left:1260px;top:407px;width:26px;height:233px;background:#f0f0f0"></div>
<svg style="position:absolute;left:1265px;top:416px" width="16" height="220"><path d="M2.2 10L7.6 4.6L13 10" stroke="#c4c4c4" stroke-width="2.8" fill="none"/><path d="M2 207.5L7.5 213L13 207.5" stroke="#c4c4c4" stroke-width="2.8" fill="none"/></svg>
<div class="t" style="left:708px;top:411.9px;font-size:15.5px;color:#000;">$F$3:$F$5 &lt;= 1</div>
<div style="position:absolute;left:1298px;top:407px;width:219px;height:35px;background:#e1e1e1;border:1px solid #adadad;box-sizing:border-box"></div>
<div class="t" style="left:1407.5px;transform:translateX(-50%);top:417.9px;font-size:15.5px;color:#000;">Д<u>о</u>бавить</div>
<div style="position:absolute;left:1298px;top:457px;width:219px;height:35px;background:#e1e1e1;border:1px solid #adadad;box-sizing:border-box"></div>
<div class="t" style="left:1407.5px;transform:translateX(-50%);top:467.9px;font-size:15.5px;color:#000;">Измени<u>т</u>ь</div>
<div style="position:absolute;left:1298px;top:507px;width:219px;height:35px;background:#e1e1e1;border:1px solid #adadad;box-sizing:border-box"></div>
<div class="t" style="left:1407.5px;transform:translateX(-50%);top:517.9px;font-size:15.5px;color:#000;"><u>У</u>далить</div>
<div style="position:absolute;left:1298px;top:568px;width:219px;height:38px;background:#e1e1e1;border:1px solid #adadad;box-sizing:border-box"></div>
<div class="t" style="left:1407.5px;transform:translateX(-50%);top:579.9px;font-size:15.5px;color:#000;">Сбросить</div>
<div style="position:absolute;left:1298px;top:618px;width:219px;height:39px;background:#e1e1e1;border:1px solid #adadad;box-sizing:border-box"></div>
<div class="t" style="left:1407.5px;transform:translateX(-50%);top:629.9px;font-size:15.5px;color:#000;"><u>З</u>агрузить/сохранить</div>
<svg style="position:absolute;left:707px;top:658px" width="22" height="22"><rect x="1.5" y="1.5" width="19" height="19" fill="#fff" stroke="#333" stroke-width="1.3"/><path d="M5 11l4 4 8-9" stroke="#333" stroke-width="1.6" fill="none"/></svg>
<div class="t" style="left:734px;top:662.9px;font-size:15.5px;color:#000;">Сделать переме<u>н</u>ные без ограничений неотрицательными</div>
<div class="t" style="left:706px;top:702.9px;font-size:15.5px;color:#000;">Выберите</div>
<div class="t" style="left:706px;top:723.9px;font-size:15.5px;color:#000;">метод решения:</div>
<div style="position:absolute;left:868px;top:696px;width:452px;height:34px;background:#fff;border:1px solid #adadad;box-sizing:border-box"></div>
<div style="position:absolute;left:1293px;top:696px;width:27px;height:34px;background:#e1e1e1;border:2px solid #a9a9a9;box-sizing:border-box"></div>
<svg style="position:absolute;left:1298px;top:708px" width="14" height="10"><path d="M2 2L7.2 7L12.4 2" stroke="#333" stroke-width="1.3" fill="none"/></svg>
<div class="t" style="left:874px;top:705.9px;font-size:15.5px;color:#000;">Поиск решения нелинейных задач методом ОПГ</div>
<div style="position:absolute;left:1331px;top:697px;width:186px;height:36px;background:#e1e1e1;border:1px solid #adadad;box-sizing:border-box"></div>
<div class="t" style="left:1424.0px;transform:translateX(-50%);top:707.9px;font-size:15.5px;color:#000;">Параметры</div>
<div style="position:absolute;left:703px;top:765px;width:803px;height:110px;border:1px solid #dcdcdc;box-sizing:border-box"></div>
<div class="t" style="left:717px;top:772.9px;font-size:15.5px;color:#000;">Метод решения</div>
<div class="t" style="left:717px;top:802.9px;font-size:15.5px;color:#000;">Для гладких нелинейных задач используйте поиск решения нелинейных задач методом ОПГ, для линейных</div>
<div class="t" style="left:717px;top:823.9px;font-size:15.5px;color:#000;">задач - поиск решения линейных задач симплекс-методом, а для негладких задач - эволюционный поиск</div>
<div class="t" style="left:717px;top:844.9px;font-size:15.5px;color:#000;">решения.</div>
<div style="position:absolute;left:682px;top:908px;width:175px;height:39px;background:#e1e1e1;border:1px solid #adadad;box-sizing:border-box"></div>
<div class="t" style="left:769.5px;transform:translateX(-50%);top:919.9px;font-size:15.5px;color:#000;">Справка</div>
<div style="position:absolute;left:1155px;top:908px;width:175px;height:39px;background:#e1e1e1;border:2px solid #0078d7;box-sizing:border-box"></div>
<div class="t" style="left:1242.5px;transform:translateX(-50%);top:919.9px;font-size:15.5px;color:#000;">Найти решение</div>
<div style="position:absolute;left:1353px;top:908px;width:175px;height:39px;background:#e1e1e1;border:1px solid #adadad;box-sizing:border-box"></div>
<div class="t" style="left:1440.5px;transform:translateX(-50%);top:919.9px;font-size:15.5px;color:#000;">Закрыть</div>

</body></html>
